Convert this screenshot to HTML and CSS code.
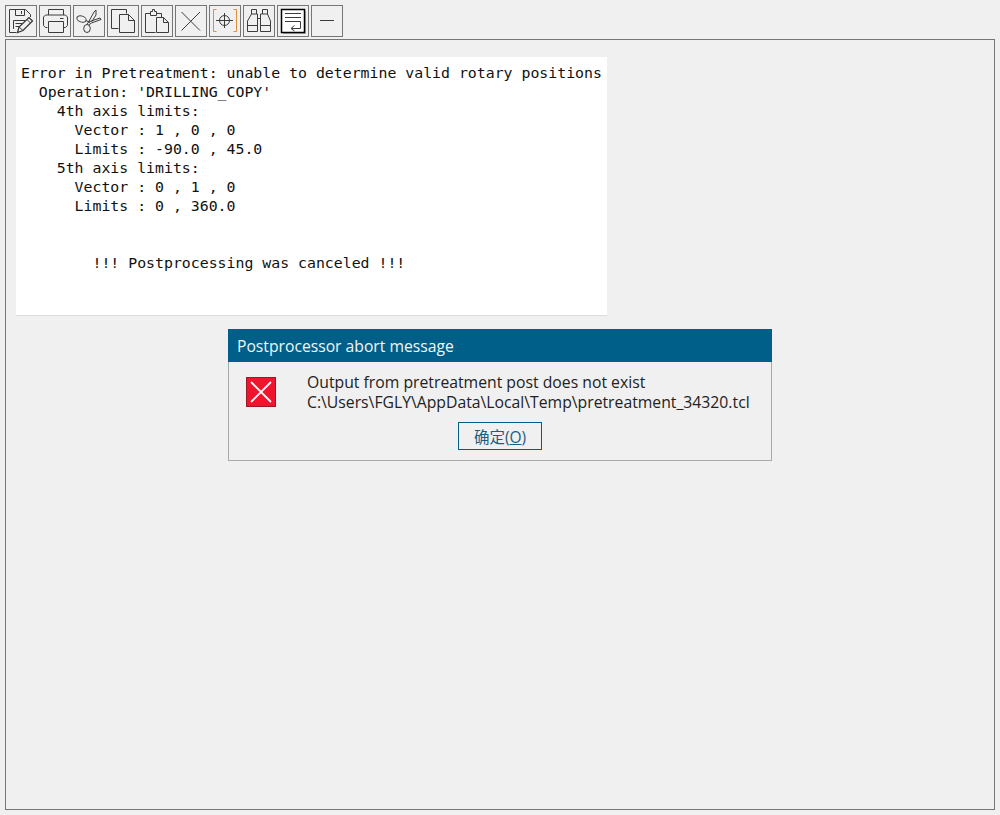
FILE: index.html
```html
<!DOCTYPE html>
<html lang="en">
<head>
<meta charset="utf-8">
<title>Postprocessor</title>
<link rel="stylesheet" href="styles.css">
</head>
<body>
<div class="toolbar">
  <button class="tool"><svg viewBox="1 1 30 30"><path d="M11.500 27.500H4.500V4.500H20.500L25.500 9.500V12M10.500 4.500V10.500H19.500V4.500M16.500 6V9M8.500 24V15.500H20"/><path d="M10.500 18.500H17M10.500 21.500H14"/><path class="bold" d="M12.500 27.500L14 22L24 12.500L27.500 16L18 25.500Z"/><path d="M14 22L18 25.500M22 14.500L25.500 18"/></svg></button>
  <button class="tool"><svg viewBox="1 1 30 30"><path d="M9.500 10V4.500H24.500V10M8.500 22.500H6.500L4.500 20.500V12L6.500 10H26.500L28.500 12V20.500L26.500 22.500H24.500M9.500 16.500H24.500V27.500H9.500ZM21 13.500H24.500"/></svg></button>
  <button class="tool"><svg viewBox="1 1 30 30"><ellipse cx="8.500" cy="14" rx="4.800" ry="3" transform="rotate(18 8.500 14)"/><ellipse cx="14" cy="23.500" rx="3.300" ry="4"/><path d="M13 15.500L17 17.500M14 19.500L15.500 17L27 13L28 14.500L18.500 18L15.500 20M15.500 17L21 7L23 5L23 10L18.500 17"/></svg></button>
  <button class="tool"><svg viewBox="1 1 30 30"><path d="M19.500 8.500V4.500H4.500V23.500H11.500M12.500 9.500H21.500L27.500 15.500V27.500H12.500ZM21.500 9.500V15.500H27.500"/></svg></button>
  <button class="tool"><svg viewBox="1 1 30 30"><path d="M14.500 27.500H4.500V8.500H9.500M15.500 8.500H20.500V12M9.500 10.500V6.500H11.500V4.500H13.500V6.500H15.500V10.500ZM15.500 12.500H22.500L27.500 17.500V27.500H15.500ZM22.500 12.500V17.500H27.500"/></svg></button>
  <button class="tool"><svg viewBox="1 1 30 30"><path d="M6.500 7L25 25.500M25 7L6.500 25.500"/></svg></button>
  <button class="tool"><svg viewBox="1 1 30 30"><path class="orange" d="M7.500 4.500H4.500V26.500H7.500M24.500 4.500H27.500V26.500H24.500"/><circle cx="15.500" cy="15.500" r="5"/><path d="M15.500 8V23M7 15.500H24"/></svg></button>
  <button class="tool"><svg viewBox="1 1 30 30"><path d="M8.500 9V4.500H13.500V9M8.500 9H14.500V26.500H4.500V16ZM19.500 9V4.500H24.500V9M19.500 9H17.500V26.500H27.500V16L24.500 9ZM14.500 13.500H17.500M4.500 20.500H14.500M17.500 20.500H27.500"/></svg></button>
  <button class="tool"><svg viewBox="1 1 30 30"><rect class="shadow" x="6" y="6" width="23" height="23"/><rect class="fat" x="4.500" y="4.500" width="23" height="23"/><path d="M8 8.500H24M8 12.500H24M8 16.500H23.500V23.500H14.500M17.500 20.500L14 23.500L17.500 26"/></svg></button>
  <button class="tool"><svg viewBox="1 1 30 30"><path d="M9 15.500H23"/></svg></button>
</div>
<main class="panel">
  <pre class="log">Error in Pretreatment: unable to determine valid rotary positions
  Operation: 'DRILLING_COPY'
    4th axis limits:
      Vector : 1 , 0 , 0
      Limits : -90.0 , 45.0
    5th axis limits:
      Vector : 0 , 1 , 0
      Limits : 0 , 360.0


        !!! Postprocessing was canceled !!!
</pre>
  <section class="dialog">
    <h1 class="dialog-title">Postprocessor abort message</h1>
    <div class="dialog-body">
      <svg class="error-icon" viewBox="0 0 30 30"><rect x="0.500" y="0.500" width="29" height="29"/><path d="M5 5l20 20M25 5L5 25"/></svg>
      <p class="dialog-text">Output from pretreatment post does not exist<br>C:\Users\FGLY\AppData\Local\Temp\pretreatment_34320.tcl</p>
    </div>
    <div class="dialog-actions"><button class="ok">确定(<u>O</u>)</button></div>
  </section>
</main>
</body>
</html>
```
FILE: styles.css
```css
* { box-sizing: border-box; }
html, body { height: 100%; }
body {
  margin: 0;
  padding: 5px;
  width: 1000px;
  height: 815px;
  overflow: hidden;
  background: #f0f0f0;
  display: flex;
  flex-direction: column;
  gap: 2px;
}
.toolbar { display: flex; gap: 2px; height: 32px; flex: none; }
.tool {
  width: 32px;
  height: 32px;
  padding: 0;
  border: 1px solid #767676;
  background: #f0f0f0;
  display: block;
}
.tool svg { display: block; width: 30px; height: 30px; fill: none; stroke: #3c3c3c; stroke-width: 1; }
.tool .orange { stroke: #dc8f3e; }
.tool .fat { stroke: #000; stroke-width: 1.500; fill: #fff; }
.tool .shadow { stroke: none; fill: #b5b5b5; }
.tool .bold { stroke: #333; stroke-width: 1.200; fill: #f0f0f0; }
.panel {
  width: 990px;
  height: 771px;
  flex: none;
  border: 1px solid #767676;
  background: #f0f0f0;
  padding: 17px 10px 0;
  display: flex;
  flex-direction: column;
  align-items: flex-start;
}
.log {
  margin: 0;
  width: 591px;
  height: 259px;
  padding: 7px 0 0 5px;
  background: #fff;
  border-bottom: 1px solid #dcdcdc;
  font-family: "DejaVu Sans Mono", monospace;
  font-size: 14.850px;
  line-height: 19px;
  color: #111;
  overflow: hidden;
}
.dialog {
  width: 544px;
  height: 132px;
  margin-top: 13px;
  margin-left: 212px;
  border: 1px solid #a9a9a9;
  border-top: 0;
  background: #f0f0f0;
  font-family: "Open Sans", sans-serif;
  color: #222;
}
.dialog-title {
  margin: 0 -1px;
  height: 33px;
  padding-left: 9px;
  background: #005f89;
  color: #f2f6f8;
  font-size: 15.700px;
  font-weight: 400;
  line-height: 35px;
}
.dialog-body { display: flex; padding: 10px 0 0 17px; gap: 31px; height: 60px; }
.error-icon { width: 30px; height: 30px; margin-top: 5px; flex: none; }
.error-icon rect { fill: #f0142e; stroke: #9c1a28; }
.error-icon path { stroke: #fff; stroke-width: 1.800; fill: none; }
.dialog-text { margin: 0; font-size: 15.750px; line-height: 20px; white-space: nowrap; }
.dialog-actions { display: flex; justify-content: center; }
.ok {
  width: 84px;
  height: 28px;
  padding: 0;
  border: 1px solid #005f89;
  background: #f0f0f0;
  color: #1a5f80;
  font-family: "Open Sans", "Noto Sans CJK SC", sans-serif;
  font-size: 15.500px;
}
```
